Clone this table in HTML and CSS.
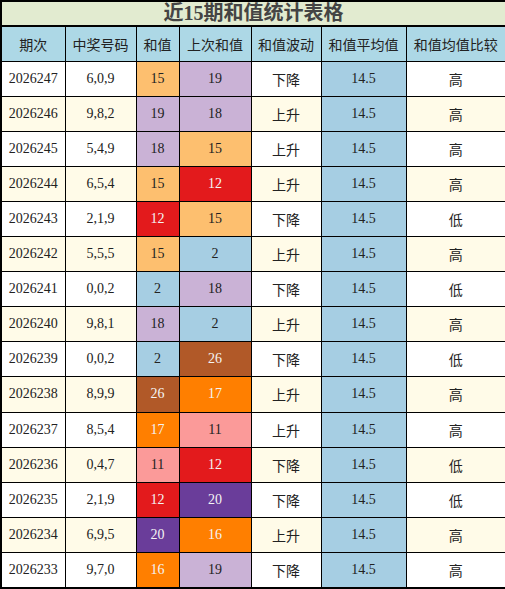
FILE: index.html
```html
<!DOCTYPE html>
<html lang="zh">
<head>
<meta charset="utf-8">
<title>近15期和值统计表格</title>
<link rel="stylesheet" href="styles.css">
</head>
<body>
<table class="stat">
	<colgroup>
		<col style="width:64px"><col style="width:71px"><col style="width:43px"><col style="width:72px"><col style="width:70px"><col style="width:85px"><col style="width:100px">
	</colgroup>
	<tr class="title"><td colspan="7">近15期和值统计表格</td></tr>
	<tr class="head">
		<td>期次</td><td>中奖号码</td><td>和值</td><td>上次和值</td><td>和值波动</td><td>和值平均值</td><td>和值均值比较</td>
	</tr>
	<tr><td>2026247</td><td>6,0,9</td><td class="c-peach">15</td><td class="c-lav">19</td><td class="cn">下降</td><td class="avg">14.5</td><td class="cn">高</td></tr>
	<tr class="alt"><td>2026246</td><td>9,8,2</td><td class="c-lav">19</td><td class="c-lav">18</td><td class="cn">上升</td><td class="avg">14.5</td><td class="cn">高</td></tr>
	<tr><td>2026245</td><td>5,4,9</td><td class="c-lav">18</td><td class="c-peach">15</td><td class="cn">上升</td><td class="avg">14.5</td><td class="cn">高</td></tr>
	<tr class="alt"><td>2026244</td><td>6,5,4</td><td class="c-peach">15</td><td class="c-red">12</td><td class="cn">上升</td><td class="avg">14.5</td><td class="cn">高</td></tr>
	<tr><td>2026243</td><td>2,1,9</td><td class="c-red">12</td><td class="c-peach">15</td><td class="cn">下降</td><td class="avg">14.5</td><td class="cn">低</td></tr>
	<tr class="alt"><td>2026242</td><td>5,5,5</td><td class="c-peach">15</td><td class="c-blue">2</td><td class="cn">上升</td><td class="avg">14.5</td><td class="cn">高</td></tr>
	<tr><td>2026241</td><td>0,0,2</td><td class="c-blue">2</td><td class="c-lav">18</td><td class="cn">下降</td><td class="avg">14.5</td><td class="cn">低</td></tr>
	<tr class="alt"><td>2026240</td><td>9,8,1</td><td class="c-lav">18</td><td class="c-blue">2</td><td class="cn">上升</td><td class="avg">14.5</td><td class="cn">高</td></tr>
	<tr><td>2026239</td><td>0,0,2</td><td class="c-blue">2</td><td class="c-brown">26</td><td class="cn">下降</td><td class="avg">14.5</td><td class="cn">低</td></tr>
	<tr class="alt"><td>2026238</td><td>8,9,9</td><td class="c-brown">26</td><td class="c-orange">17</td><td class="cn">上升</td><td class="avg">14.5</td><td class="cn">高</td></tr>
	<tr><td>2026237</td><td>8,5,4</td><td class="c-orange">17</td><td class="c-pink">11</td><td class="cn">上升</td><td class="avg">14.5</td><td class="cn">高</td></tr>
	<tr class="alt"><td>2026236</td><td>0,4,7</td><td class="c-pink">11</td><td class="c-red">12</td><td class="cn">下降</td><td class="avg">14.5</td><td class="cn">低</td></tr>
	<tr><td>2026235</td><td>2,1,9</td><td class="c-red">12</td><td class="c-purple">20</td><td class="cn">下降</td><td class="avg">14.5</td><td class="cn">低</td></tr>
	<tr class="alt"><td>2026234</td><td>6,9,5</td><td class="c-purple">20</td><td class="c-orange">16</td><td class="cn">上升</td><td class="avg">14.5</td><td class="cn">高</td></tr>
	<tr><td>2026233</td><td>9,7,0</td><td class="c-orange">16</td><td class="c-lav">19</td><td class="cn">下降</td><td class="avg">14.5</td><td class="cn">高</td></tr>
</table>
</body>
</html>
```
FILE: styles.css
```css
html, body {
	margin: 0;
	padding: 0;
	background: #fff;
}
.stat {
	width: 505px;
	table-layout: fixed;
	border-collapse: collapse;
	border: 2px solid #000;
	font-family: "Liberation Serif", "Noto Sans CJK SC", serif;
	font-size: 14px;
	color: #222;
}
.stat td {
	height: 35.1px;
	padding: 0;
	border: 1px solid #000;
	text-align: center;
	vertical-align: middle;
	box-sizing: border-box;
}
.stat .title td {
	height: 25px;
	border-bottom: 2px solid #000;
	background: #e2ebd0;
	color: #444;
	font-size: 20px;
	font-weight: bold;
	line-height: 23px;
}
.stat .head td {
	background: #add8e6;
	font-family: "Noto Sans CJK SC", sans-serif;
	color: #222;
}
.stat .alt td { background: #fffbe8; }
.stat td.cn { font-family: "Noto Sans CJK SC", sans-serif; }
.stat td.avg { background: #a6cee3; }

.stat td.c-blue { background: #a6cee3; }
.stat td.c-pink { background: #fb9a99; }
.stat td.c-red { background: #e31a1c; color: #f4f4f4; }
.stat td.c-peach { background: #fdbf6f; }
.stat td.c-orange { background: #ff7f00; color: #f4f4f4; }
.stat td.c-lav { background: #cab2d6; }
.stat td.c-purple { background: #6a3d9a; color: #f4f4f4; }
.stat td.c-brown { background: #b15928; color: #f4f4f4; }
```
